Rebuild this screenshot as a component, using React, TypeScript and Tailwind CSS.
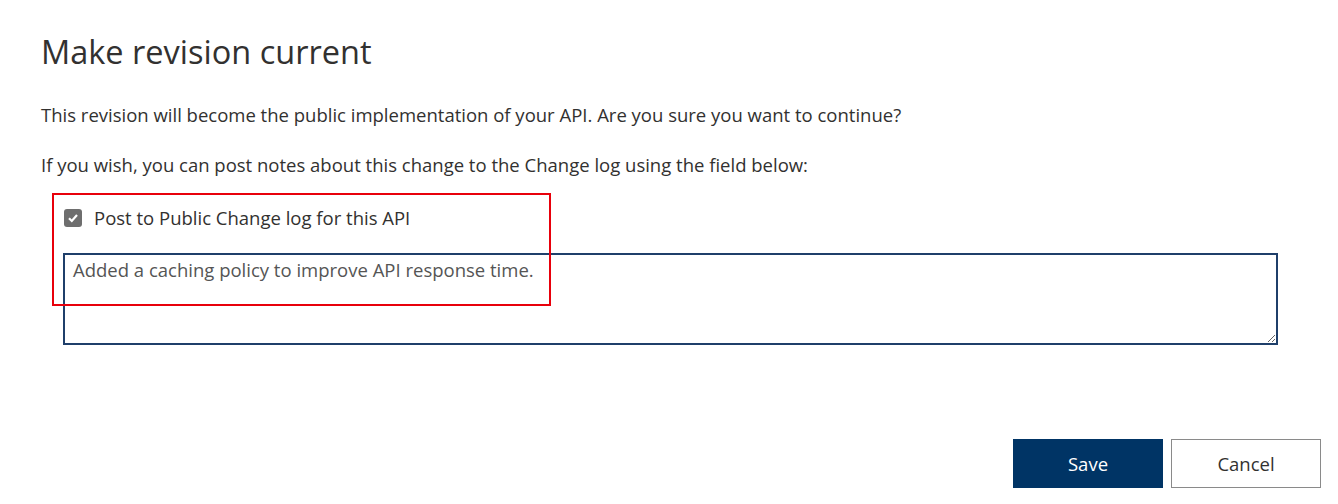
import React from "react";

export default function App() {
  return (
    <div className="relative w-[1338px] h-[504px] bg-white text-[#323130]" style={{ fontFamily: '"Open Sans", "Noto Sans", sans-serif' }}>
      <div className="pl-[41px] pr-[17px] pt-[30px]">
        <h1 className="text-[32.5px] leading-[44px] font-normal text-[#323130]">Make revision current</h1>
        <p className="mt-[29px] text-[18.5px] leading-[24px]">This revision will become the public implementation of your API. Are you sure you want to continue?</p>
        <p className="mt-[26px] text-[18.5px] leading-[24px]">If you wish, you can post notes about this change to the Change log using the field below:</p>
        <div className="pl-[23px] mt-[29px]">
          <label className="flex items-center gap-[12px]">
            <span className="w-[18px] h-[18px] rounded-[3px] bg-[#6e6e6e] flex items-center justify-center">
              <svg width="12" height="12" viewBox="0 0 12 12"><path d="M2 6.2 L4.8 9 L10 3" stroke="white" strokeWidth="2.2" fill="none" /></svg>
            </span>
            <span className="text-[18.5px] leading-[24px]">Post to Public Change log for this API</span>
          </label>
          <textarea
            className="mt-[23px] -ml-[1px] block w-[1215px] h-[92px] border-2 border-[#1f3f6a] px-[8px] py-[3px] text-[18.5px] leading-[24px] text-[#555] outline-none resize-y"
            style={{ fontFamily: '"Open Sans", "Noto Sans", sans-serif' }}
            defaultValue="Added a caching policy to improve API response time."
          />
        </div>
        <div className="flex justify-end gap-[8px] mt-[94px]">
          <button className="w-[150px] h-[49px] bg-[#003465] text-white text-[18.5px]">Save</button>
          <button className="w-[150px] h-[49px] bg-white border border-[#8a8a8a] text-[#323130] text-[18.5px]">Cancel</button>
        </div>
      </div>
      <div className="absolute left-[52px] top-[193px] w-[499px] h-[113px] border-2 border-[#e8000b] pointer-events-none" />
    </div>
  );
}
